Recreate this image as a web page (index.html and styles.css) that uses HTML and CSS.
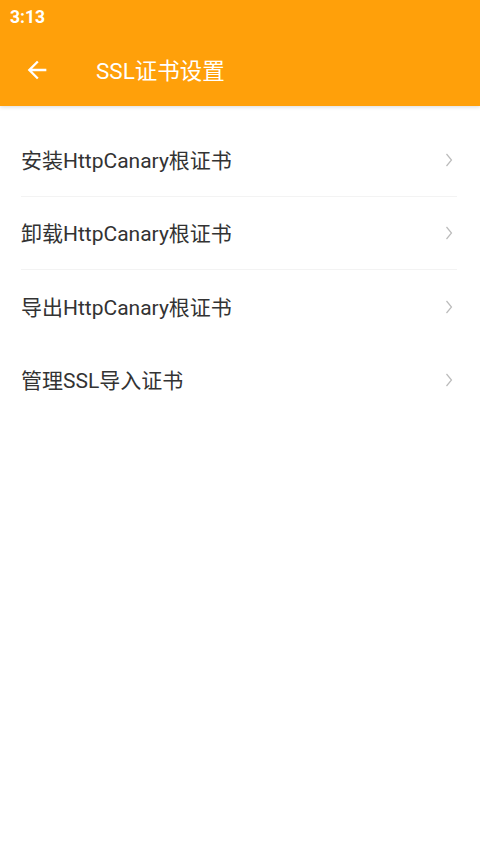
FILE: index.html
```html
<!DOCTYPE html>
<html lang="zh-CN">
<head>
  <meta charset="UTF-8">
  <title>SSL证书设置</title>
  <link rel="stylesheet" href="styles.css">
</head>
<body>

  <div class="header">
    <div class="status-bar">3:13</div>
    <div class="toolbar">
      <svg class="back" width="28" height="28" viewBox="0 0 24 24">
        <path d="M20 11H7.83l5.59-5.59L12 4l-8 8 8 8 1.41-1.41L7.83 13H20v-2z" fill="#fff"/>
      </svg>
      <span class="title">SSL证书设置</span>
    </div>
  </div>

  <div class="list">
    <div class="row line">
      <span>安装HttpCanary根证书</span>
      <svg class="chevron" width="8" height="16" viewBox="0 0 8 16"><path d="M1.5 2l5 6-5 6" /></svg>
    </div>
    <div class="row line">
      <span>卸载HttpCanary根证书</span>
      <svg class="chevron" width="8" height="16" viewBox="0 0 8 16"><path d="M1.5 2l5 6-5 6" /></svg>
    </div>
    <div class="row">
      <span>导出HttpCanary根证书</span>
      <svg class="chevron" width="8" height="16" viewBox="0 0 8 16"><path d="M1.5 2l5 6-5 6" /></svg>
    </div>
    <div class="row">
      <span>管理SSL导入证书</span>
      <svg class="chevron" width="8" height="16" viewBox="0 0 8 16"><path d="M1.5 2l5 6-5 6" /></svg>
    </div>
  </div>

</body>
</html>
```

FILE: styles.css
```css
body {
  margin: 0;
  font-family: Roboto, "Noto Sans CJK SC", sans-serif;
  background-color: #fff;
}

.header {
  background-color: #ffa00a;
  color: #fff;
  box-shadow: 0 1px 4px rgba(0, 0, 0, 0.15);
}

.status-bar {
  height: 34px;
  line-height: 34px;
  padding-left: 10px;
  font-size: 17.5px;
  font-weight: bold;
}

.toolbar {
  height: 72px;
  display: flex;
  align-items: center;
  padding-left: 23px;
}

.back {
  margin-right: 45px;
}

.title {
  font-size: 22.5px;
  margin-top: -3px;
}

.list {
  padding-top: 18px;
}

.row {
  height: 73px;
  margin: 0 27px 0 21px;
  display: flex;
  align-items: center;
  justify-content: space-between;
  font-size: 21px;
  color: #333;
  box-sizing: border-box;
}

.row span {
  margin-top: -2px;
}

.row.line {
  border-bottom: 1px solid #f3f3f3;
  margin-right: 23px;
  padding-right: 4px;
}

.chevron {
  fill: none;
  stroke: #bbb;
  stroke-width: 1.2;
}
```
